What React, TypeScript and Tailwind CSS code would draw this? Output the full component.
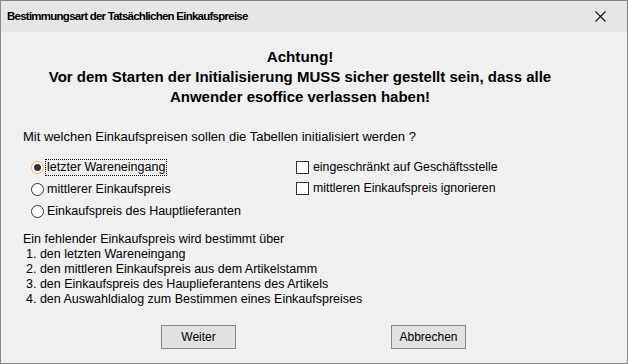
import React from 'react';

const font = { fontFamily: '"Liberation Sans", Arial, sans-serif' };

function Radio({ checked, label, focused }: { checked?: boolean; label: string; focused?: boolean }) {
  return (
    <div className="flex items-center h-[22px]">
      <span
        className={`w-[13px] h-[13px] rounded-full border flex items-center justify-center bg-white ${
          checked ? 'border-[#f0b55a]' : 'border-[#333]'
        }`}
      >
        {checked && <span className="w-[7px] h-[7px] rounded-full bg-[#333]" />}
      </span>
      <span
        className={`ml-[2px] px-[1px] leading-[15px] text-[12.5px] text-black ${
          focused ? 'outline outline-1 outline-dotted outline-black' : ''
        }`}
      >
        {label}
      </span>
    </div>
  );
}

function Check({ label }: { label: string }) {
  return (
    <div className="flex items-center h-[21px]">
      <span className="w-[13px] h-[13px] border border-[#333] bg-white" />
      <span className="ml-[4px] text-[12.3px] text-black leading-[15px]">{label}</span>
    </div>
  );
}

export default function App() {
  return (
    <div className="w-[628px] h-[364px] border border-[#888] bg-[#f0f0f0] flex flex-col" style={font}>
      {/* Title bar */}
      <div className="h-[31px] bg-[#e6e6e6] flex items-center justify-between pl-[6px] pr-[21px]">
        <span className="text-[11.5px] font-bold text-black tracking-[-0.75px]">
          Bestimmungsart der Tatsächlichen Einkaufspreise
        </span>
        <svg width="11" height="11" viewBox="0 0 11 11">
          <path d="M0.5 0.5 L10.5 10.5 M10.5 0.5 L0.5 10.5" stroke="#111" strokeWidth="1.1" />
        </svg>
      </div>

      <div className="flex-1 flex flex-col">
        {/* Warning */}
        <div className="mt-[15px] pr-[28px] text-center font-bold text-[15px] leading-[20px] text-black">
          <div className="text-[15.2px]">Achtung!</div>
          <div>Vor dem Starten der Initialisierung MUSS sicher gestellt sein, dass alle</div>
          <div>Anwender esoffice verlassen haben!</div>
        </div>

        <div className="mt-[22px] pl-[22px] text-[13px] text-black leading-[16px]">
          Mit welchen Einkaufspreisen sollen die Tabellen initialisiert werden ?
        </div>

        <div className="mt-[11px] flex">
          <div className="pl-[30px] w-[295px] flex flex-col">
            <Radio checked focused label="letzter Wareneingang" />
            <Radio label="mittlerer Einkaufspreis" />
            <Radio label="Einkaufspreis des Hauptlieferanten" />
          </div>
          <div className="flex flex-col pt-[1px]">
            <Check label="eingeschränkt auf Geschäftsstelle" />
            <Check label="mittleren Einkaufspreis ignorieren" />
          </div>
        </div>

        <div className="mt-[10px] pl-[22px] text-[12.5px] text-black leading-[14.9px]">
          <div>Ein fehlender Einkaufspreis wird bestimmt über</div>
          <div className="pl-[3px]">1. den letzten Wareneingang</div>
          <div className="pl-[3px]">2. den mittleren Einkaufspreis aus dem Artikelstamm</div>
          <div className="pl-[3px]">3. den Einkaufspreis des Hauplieferantens des Artikels</div>
          <div className="pl-[3px]">4. den Auswahldialog zum Bestimmen eines Einkaufspreises</div>
        </div>

        <div className="mt-[18px] flex pl-[160px] gap-[155px]">
          <button className="w-[75px] h-[24px] border border-[#888] bg-[#e1e1e1] text-[12px] text-black">
            Weiter
          </button>
          <button className="w-[75px] h-[24px] border border-[#888] bg-[#e1e1e1] text-[12px] text-black">
            Abbrechen
          </button>
        </div>
      </div>
    </div>
  );
}
